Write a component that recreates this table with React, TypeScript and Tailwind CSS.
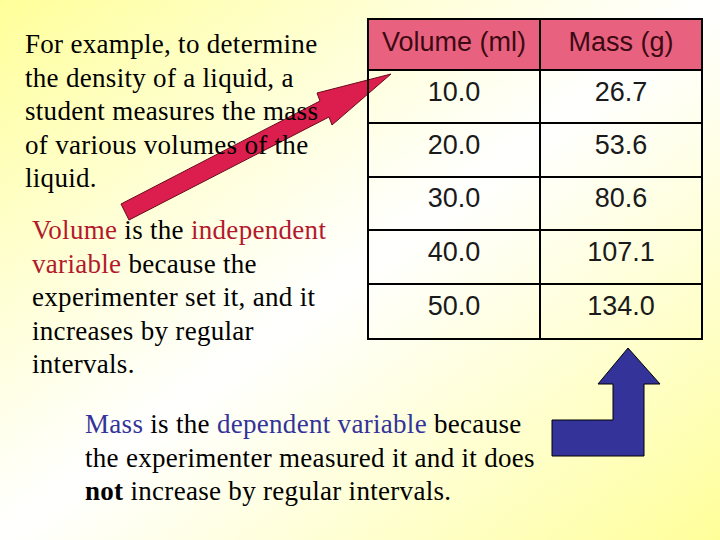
const rows = [
  ['10.0', '26.7'],
  ['20.0', '53.6'],
  ['30.0', '80.6'],
  ['40.0', '107.1'],
  ['50.0', '134.0'],
]

function RedArrow() {
  return (
    <svg className="absolute inset-0" width="720" height="540" viewBox="0 0 720 540">
      <polygon
        points="121,204 320,101 317,93 391,74 332,125 329,117 129,220"
        fill="#dc1e4e"
        stroke="#6a0a1c"
        strokeWidth="1"
      />
    </svg>
  )
}

function BlueArrow() {
  return (
    <svg width="111" height="111" viewBox="0 0 111 111" className="-mt-[34.5px] shrink-0">
      <polygon
        points="77,1 109,37 93,37 93,109 1,109 1,73 62,73 62,37 47,37"
        fill="#333399"
        stroke="#000"
        strokeWidth="1"
      />
    </svg>
  )
}

export default function App() {
  return (
    <div className="relative w-[720px] h-[540px] overflow-hidden bg-linear-to-br from-[#ffff99] via-white to-[#ffff99] font-['Liberation_Serif','Times_New_Roman',serif] text-[27px] leading-[33.5px] tracking-[0.3px] text-black">
      <RedArrow />

      <div className="relative flex items-start">
        <div className="w-[367px] shrink-0 pt-[28px]">
          <p className="pl-[25px] whitespace-nowrap">
            For example, to determine<br />
            the density of a liquid, a<br />
            student measures the mass<br />
            of various volumes of the<br />
            liquid.
          </p>
          <p className="pl-[32px] mt-[18.5px] whitespace-nowrap">
            <span className="text-[#b3192c]">Volume</span> is the <span className="text-[#b3192c]">independent</span><br />
            <span className="text-[#b3192c]">variable</span> because the<br />
            experimenter set it, and it<br />
            increases by regular<br />
            intervals.
          </p>
        </div>

        <div className="mt-[18px] w-[336px] border-2 border-black font-['Liberation_Sans',Arial,sans-serif] text-[27px] leading-none tracking-normal">
          <div className="flex h-[51px] bg-[#e8627f] text-[#3d0a14] border-b-2 border-black">
            <div className="w-[172px] flex items-center justify-center pb-[5px] border-r-2 border-black">Volume (ml)</div>
            <div className="flex-1 flex items-center justify-center pb-[5px]">Mass (g)</div>
          </div>
          {rows.map(([v, m], i) => (
            <div
              key={v}
              className={`flex h-[53.4px] text-[#1a1a1a] ${i < rows.length - 1 ? 'border-b-2 border-black' : ''}`}
            >
              <div className="w-[172px] flex items-center justify-center pb-[9px] border-r-2 border-black">{v}</div>
              <div className="flex-1 flex items-center justify-center pb-[9px]">{m}</div>
            </div>
          ))}
        </div>
      </div>

      <div className="relative flex items-start">
        <p className="w-[551px] shrink-0 pl-[85px] pt-[26.5px] whitespace-nowrap">
          <span className="text-[#333399]">Mass</span> is the <span className="text-[#333399]">dependent variable</span> because<br />
          the experimenter measured it and it does<br />
          <b>not</b> increase by regular intervals.
        </p>
        <BlueArrow />
      </div>
    </div>
  )
}
